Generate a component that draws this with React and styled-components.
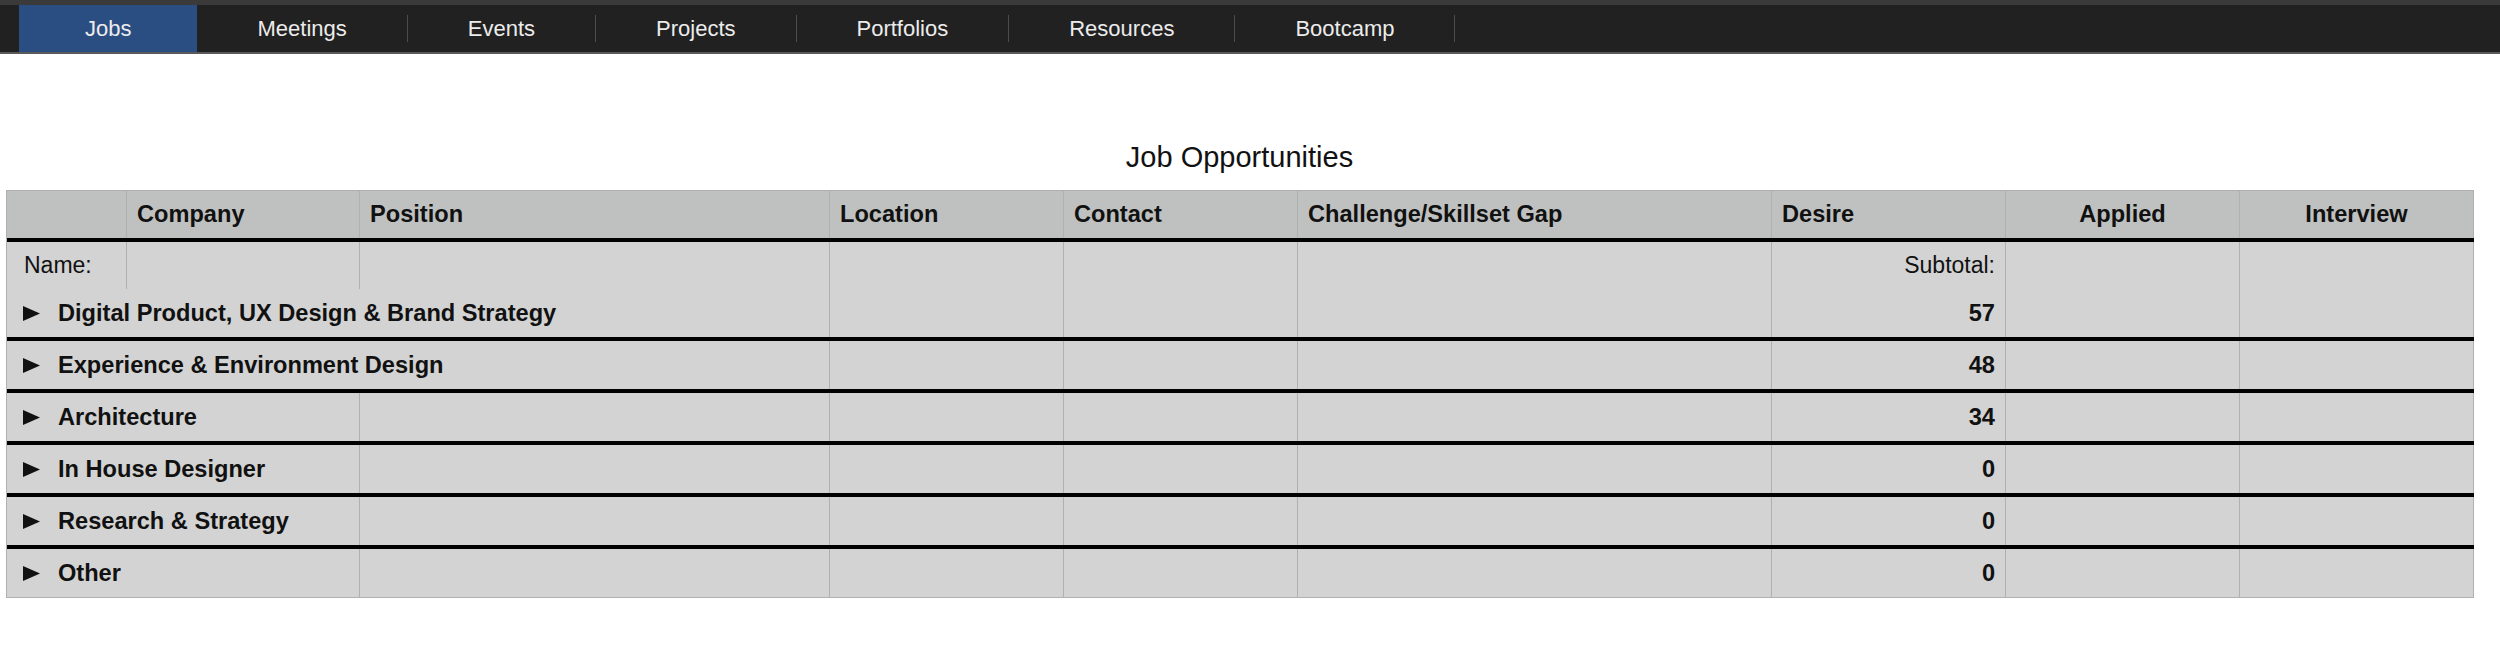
import React from 'react';
import styled, { createGlobalStyle } from 'styled-components';

const GlobalStyle = createGlobalStyle`
  body {
    margin: 0;
    background: #ffffff;
    font-family: "Liberation Sans", Arial, Helvetica, sans-serif;
  }
`;

const COLUMNS = '120px 233px 470px 234px 234px 474px 234px 234px 234px';

const TabBar = styled.nav`
  display: flex;
  align-items: stretch;
  height: 54px;
  box-sizing: border-box;
  padding-left: 19px;
  background: #212121;
  border-top: 5px solid #3a3a3a;
  border-bottom: 2px solid #5a5a5a;
`;

const Tab = styled.div`
  display: flex;
  align-items: center;
  padding: 0 ${(p) => (p.$active ? '66px' : '60px')};
  background: ${(p) => (p.$active ? '#2b4e82' : 'transparent')};
  color: #ececec;
  font-size: 22px;
  cursor: pointer;
`;

const Divider = styled.span`
  align-self: center;
  width: 1px;
  height: 27px;
  background: #4c4c4c;
`;

const Title = styled.h1`
  width: 2467px;
  margin: 86px 0 16px 6px;
  font-size: 29px;
  font-weight: 400;
  line-height: 34px;
  text-align: center;
  color: #111111;
`;

const Table = styled.div`
  box-sizing: content-box;
  width: 2467px;
  margin-left: 6px;
  border-left: 1px solid #b0b0b0;
  border-top: 1px solid #b0b0b0;
  border-bottom: 1px solid #b0b0b0;
`;

const Row = styled.div`
  display: grid;
  grid-template-columns: ${COLUMNS};
  box-sizing: content-box;
  height: ${(p) => p.$height || 48}px;
  background: ${(p) => (p.$head ? '#bfc1c0' : '#d3d3d3')};
  border-bottom: ${(p) => (p.$rule ? '4px solid #000000' : 'none')};
`;

const Cell = styled.div`
  grid-column: span ${(p) => p.$span || 1};
  display: flex;
  align-items: center;
  justify-content: ${(p) =>
    p.$align === 'right' ? 'flex-end' : p.$align === 'center' ? 'center' : 'flex-start'};
  box-sizing: border-box;
  padding: 0 10px 0 ${(p) => (p.$indent ? p.$indent : 10)}px;
  border-right: 1px solid #b0b0b0;
  font-size: ${(p) => (p.$bold ? '23.6px' : '23px')};
  font-weight: ${(p) => (p.$bold ? 700 : 400)};
  color: #111111;
  white-space: nowrap;
`;

const Arrow = styled.svg`
  flex: none;
  width: 17px;
  height: 15px;
  margin-right: 18px;
`;

const tabs = ['Jobs', 'Meetings', 'Events', 'Projects', 'Portfolios', 'Resources', 'Bootcamp'];

const headers = [
  { label: '' },
  { label: 'Company' },
  { label: 'Position' },
  { label: 'Location' },
  { label: 'Contact' },
  { label: 'Challenge/Skillset Gap' },
  { label: 'Desire' },
  { label: 'Applied', align: 'center' },
  { label: 'Interview', align: 'center' },
];

const groups = [
  { name: 'Digital Product, UX Design & Brand Strategy', desire: 57, span: 3 },
  { name: 'Experience & Environment Design', desire: 48, span: 3 },
  { name: 'Architecture', desire: 34, span: 2 },
  { name: 'In House Designer', desire: 0, span: 2 },
  { name: 'Research & Strategy', desire: 0, span: 2 },
  { name: 'Other', desire: 0, span: 2 },
];

const GroupRow = ({ group, rule }) => (
  <Row $rule={rule}>
    <Cell $span={group.span} $bold $indent={16}>
      <Arrow viewBox="0 0 17 15">
        <polygon points="0,0 17,7.5 0,15" fill="#111" />
      </Arrow>
      {group.name}
    </Cell>
    {group.span === 2 && <Cell />}
    <Cell />
    <Cell />
    <Cell />
    <Cell $align="right" $bold>{group.desire}</Cell>
    <Cell />
    <Cell />
  </Row>
);

const App = () => {
  return (
    <>
      <GlobalStyle />
      <TabBar>
        {tabs.map((t, i) => (
          <React.Fragment key={t}>
            <Tab $active={i === 0}>{t}</Tab>
            {i > 0 && <Divider />}
          </React.Fragment>
        ))}
      </TabBar>
      <Title>Job Opportunities</Title>
      <Table>
        <Row $head $rule $height={47}>
          {headers.map((h, i) => (
            <Cell key={i} $bold $align={h.align}>{h.label}</Cell>
          ))}
        </Row>
        <Row $height={47}>
          <Cell $indent={17}>Name:</Cell>
          <Cell />
          <Cell />
          <Cell />
          <Cell />
          <Cell />
          <Cell $align="right">Subtotal:</Cell>
          <Cell />
          <Cell />
        </Row>
        {groups.map((g, i) => (
          <GroupRow key={g.name} group={g} rule={i < groups.length - 1} />
        ))}
      </Table>
    </>
  );
};

export default App;
